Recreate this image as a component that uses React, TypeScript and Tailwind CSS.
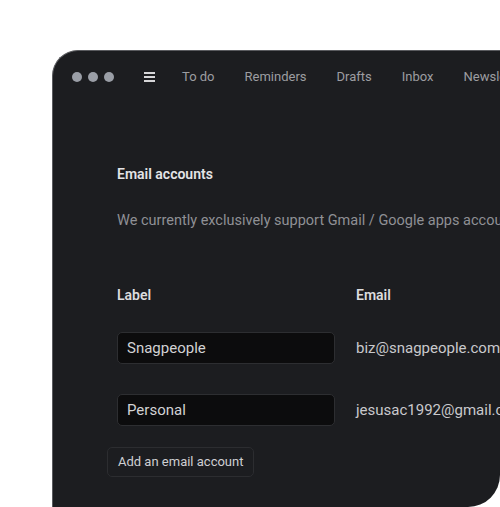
const navItems = ['To do', 'Reminders', 'Drafts', 'Inbox', 'Newsletters', 'Archive']

const accounts = [
  { label: 'Snagpeople', email: 'biz@snagpeople.com' },
  { label: 'Personal', email: 'jesusac1992@gmail.com' },
]

export default function App() {
  return (
    <div className="min-h-[507px] w-[500px] overflow-hidden bg-white pl-[52px] pt-[50px]" style={{ fontFamily: 'Roboto, "Noto Sans", sans-serif' }}>
      <div className="flex h-[457px] w-[448px] flex-col overflow-hidden rounded-tl-[26px] rounded-br-[32px] border-l border-t border-[#5a5b5f] bg-[#1c1d20]">
        {/* Top bar */}
        <div className="flex h-[51px] shrink-0 items-center whitespace-nowrap pl-[19px]">
          <div className="flex shrink-0 gap-[6px]">
            <span className="h-[10px] w-[10px] rounded-full bg-[#9a9ea6]" />
            <span className="h-[10px] w-[10px] rounded-full bg-[#9a9ea6]" />
            <span className="h-[10px] w-[10px] rounded-full bg-[#9a9ea6]" />
          </div>
          <div className="ml-[30px] flex w-[11px] shrink-0 flex-col gap-[2px]">
            <span className="h-[2px] w-full bg-[#d6d6d8]" />
            <span className="h-[2px] w-full bg-[#d6d6d8]" />
            <span className="h-[2px] w-full bg-[#d6d6d8]" />
          </div>
          <nav className="ml-[27px] flex shrink-0 gap-[30px] text-[13px] text-[#9c9da1]">
            {navItems.map((item) => (
              <span key={item}>{item}</span>
            ))}
          </nav>
        </div>

        {/* Settings */}
        <div className="whitespace-nowrap pl-[64px] pt-[62px]">
          <h2 className="text-[14px] font-semibold leading-[20px] text-[#e4e4e6]">Email accounts</h2>
          <p className="mt-[26px] text-[14.5px] leading-[22px] text-[#8f9095]">
            We currently exclusively support Gmail / Google apps accounts.
          </p>

          <div className="mt-[53px] flex text-[14px] font-semibold leading-[20px] text-[#dcdcde]">
            <span className="w-[239px] shrink-0">Label</span>
            <span>Email</span>
          </div>

          <div className="mt-[27px] flex flex-col gap-[30px]">
            {accounts.map((a) => (
              <div key={a.label} className="flex items-center">
                <div className="flex h-[32px] w-[218px] shrink-0 items-center rounded-[5px] border border-[#2d2e31] bg-[#0c0c0d] px-[9px] text-[15px] text-[#d2d2d4]">
                  {a.label}
                </div>
                <span className="ml-[21px] shrink-0 text-[15px] text-[#c9c9cc]">{a.email}</span>
              </div>
            ))}
          </div>

          <button className="-ml-[10px] mt-[21px] h-[30px] rounded-[5px] border border-[#2c2d30] px-[10px] text-[13px] text-[#cfcfd2]">
            Add an email account
          </button>
        </div>
      </div>
    </div>
  )
}
